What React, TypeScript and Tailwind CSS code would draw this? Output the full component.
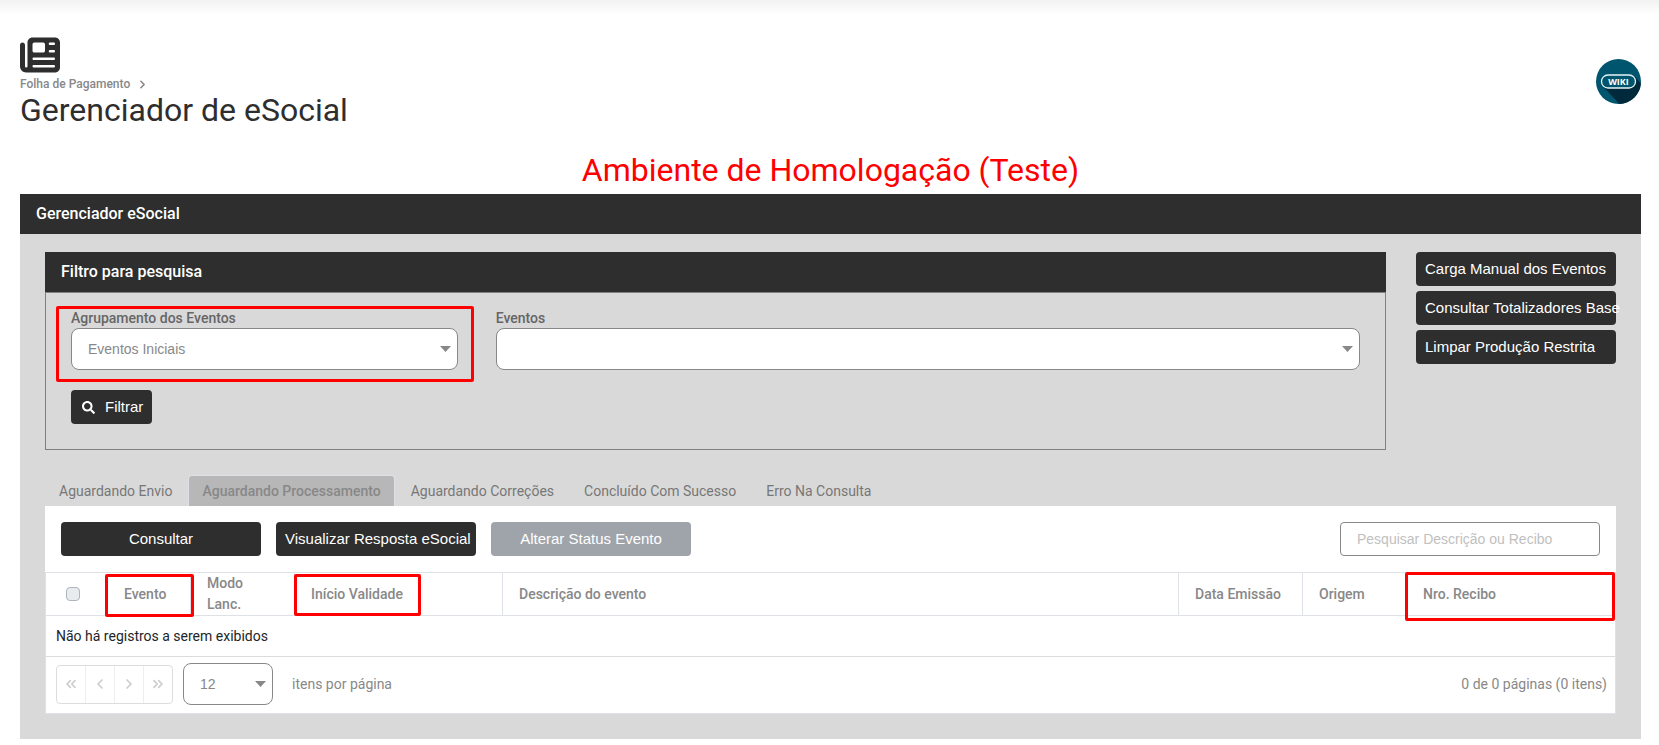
import { useState, type ReactNode } from "react";
import { ChevronLeft, ChevronRight, ChevronsLeft, ChevronsRight } from "lucide-react";
import { FaNewspaper } from "react-icons/fa6";
import { FaSearch } from "react-icons/fa";
import clsx from "clsx";

const TABS = [
    "Aguardando Envio",
    "Aguardando Processamento",
    "Aguardando Correções",
    "Concluído Com Sucesso",
    "Erro Na Consulta",
];

function Highlight({ className }: { className: string }) {
    return <span aria-hidden className={clsx("pointer-events-none absolute z-10 rounded-[2px] border-3 border-[#ff0000]", className)} />;
}

function ActionButton({ children, className, disabled }: {
    children: ReactNode;
    className?: string;
    disabled?: boolean;
}) {
    return (
        <button
            type="button"
            disabled={disabled}
            className={clsx(
                "h-[34px] rounded-[4px] px-[9px] font-['Liberation_Sans',Arial,sans-serif] text-[15px] whitespace-nowrap text-white",
                disabled ? "bg-[#9fa4ab]" : "bg-[#2e2e2e]",
                className
            )}
        >
            {children}
        </button>
    );
}

function Dropdown({ id, label, options }: {
    id: string;
    label?: string;
    options: string[];
}) {
    return (
        <div className="relative">
            <select
                id={id}
                aria-label={label}
                className="h-[42px] w-full appearance-none rounded-[8px] border border-[#888888] bg-white pr-8 pl-4 font-['Liberation_Sans',Arial,sans-serif] text-sm text-[#888888]"
            >
                {options.map((option) => (
                    <option key={option}>{option}</option>
                ))}
            </select>
            <svg viewBox="0 0 11 6" className="pointer-events-none absolute top-[18px] right-[7px] h-[6px] w-[11px] fill-[#888888]">
                <path d="M0 0h11L5.500 6z" />
            </svg>
        </div>
    );
}

function WikiLogo() {
    return (
        <svg viewBox="0 0 45 45" className="size-[45px]">
            <circle cx="22.5" cy="22.5" r="22.5" fill="#00556e" />
            <path d="M7.500 28 23.500 45A22.500 22.500 0 0 0 44.900 24.500L39 18z" fill="#002a3b" />
            <rect x="5.500" y="16" width="34" height="13" rx="6.500" fill="#00556e" stroke="#e8f3f5" strokeWidth="1.300" />
            <text
                x="22.500"
                y="26"
                textAnchor="middle"
                className="fill-white font-['Open_Sans',sans-serif] text-[9px] font-bold"
            >
                WIKI
            </text>
        </svg>
    );
}

function SectionTitle({ children }: { children: ReactNode }) {
    return <h2 className="bg-[#2e2e2e] px-4 text-base/10 font-medium text-white">{children}</h2>;
}

function FilterPanel() {
    return (
        <section className="min-w-0 flex-1">
            <SectionTitle>Filtro para pesquisa</SectionTitle>
            <div className="border border-[#808080] px-[25px] pt-[15px] pb-[25px]">
                <div className="flex gap-[38px]">
                    <div className="relative w-[30%]">
                        <label htmlFor="agrupamento" className="block text-sm/5 font-medium text-[#666666]">
                            Agrupamento dos Eventos
                        </label>
                        <Dropdown id="agrupamento" options={["Eventos Iniciais"]} />
                        <Highlight className="-top-[2px] -right-4 -bottom-3 -left-[15px]" />
                    </div>
                    <div className="flex-1">
                        <label htmlFor="eventos" className="block text-sm/5 font-medium text-[#666666]">
                            Eventos
                        </label>
                        <Dropdown id="eventos" options={[""]} />
                    </div>
                </div>
                <ActionButton className="mt-5 flex items-center gap-[10px]">
                    <FaSearch className="ml-[2px] size-[13px]" />
                    Filtrar
                </ActionButton>
            </div>
        </section>
    );
}

function EventsTable() {
    const th = "relative h-[43px] border-r border-b border-[#dee2e6] px-4 text-left font-medium text-[#888888]";

    return (
        <table className="w-full table-fixed border-separate border-spacing-0 border border-b-0 border-[#dee2e6] text-sm/[21px]">
            <colgroup>
                <col className="w-[62px]" />
                <col className="w-[83px]" />
                <col className="w-[104px]" />
                <col className="w-[208px]" />
                <col />
                <col className="w-[124px]" />
                <col className="w-[104px]" />
                <col className="w-[208px]" />
            </colgroup>
            <thead>
                <tr>
                    <th className="border-b border-[#dee2e6] pl-5 text-left">
                        <input
                            type="checkbox"
                            aria-label="Selecionar todos"
                            className="block size-[14px] appearance-none rounded-[4px] border border-[#adb5bd] bg-[#e9ecef]"
                        />
                    </th>
                    <th className={th}>
                        Evento
                        <Highlight className="top-[1px] -right-1 -bottom-[2px] -left-[3px]" />
                    </th>
                    <th className={th}>Modo Lanc.</th>
                    <th className={th}>
                        Início Validade
                        <Highlight className="top-[1px] -bottom-[1px] -left-[1px] w-[127px]" />
                    </th>
                    <th className={th}>Descrição do evento</th>
                    <th className={th}>Data Emissão</th>
                    <th className={th}>Origem</th>
                    <th className={clsx(th, "border-r-0")}>
                        Nro. Recibo
                        <Highlight className="-top-[1px] right-0 -bottom-[6px] -left-[2px]" />
                    </th>
                </tr>
            </thead>
            <tbody>
                <tr>
                    <td colSpan={8} className="h-[41px] border-b border-[#dcdcdc] px-[10px] text-[#212529]">
                        Não há registros a serem exibidos
                    </td>
                </tr>
            </tbody>
        </table>
    );
}

function Pager() {
    const buttons = [
        { label: "Primeira página", icon: ChevronsLeft },
        { label: "Página anterior", icon: ChevronLeft },
        { label: "Próxima página", icon: ChevronRight },
        { label: "Última página", icon: ChevronsRight },
    ];

    return (
        <div className="flex items-center border border-t-0 border-[#dee2e6] pt-[6px] pr-2 pb-2 pl-[10px] text-sm text-[#888888]">
            <nav className="flex h-[39px] w-[117px] divide-x divide-[#eeeeee] rounded-[4px] border border-[#dddddd]">
                {buttons.map(({ label, icon: Icon }) => (
                    <button key={label} type="button" aria-label={label} disabled className="flex flex-1 items-center justify-center text-[#cccccc]">
                        <Icon size={16} strokeWidth={2.5} />
                    </button>
                ))}
            </nav>
            <div className="mr-[19px] ml-[10px] w-[90px]">
                <Dropdown id="por-pagina" label="Itens por página" options={["12"]} />
            </div>
            <span>itens por página</span>
            <span className="ml-auto">0 de 0 páginas (0 itens)</span>
        </div>
    );
}

export default function App() {
    const [activeTab, setActiveTab] = useState(TABS[1]);

    return (
        <div className="bg-white font-[Roboto,sans-serif] text-[#2e2e2e]">
            <div className="h-[15px] bg-linear-to-b from-[#f2f2f2] to-white" />
            <div className="px-5 pt-5 sm:pr-[18px]">
                <header className="flex items-center justify-between">
                    <div>
                        <FaNewspaper className="size-10" />
                        <a href="#" className="flex items-center gap-[6px] text-xs/[18px] font-medium text-[#888888]">
                            Folha de Pagamento
                            <ChevronRight size={13} strokeWidth={3} />
                        </a>
                        <h1 className="text-[32px]/[34px]">Gerenciador de eSocial</h1>
                    </div>
                    <a href="#" aria-label="Wiki">
                        <WikiLogo />
                    </a>
                </header>

                <p className="mt-[19px] text-center text-[32px]/[48px] text-[#ff0000]">Ambiente de Homologação (Teste)</p>

                <main>
                    <SectionTitle>Gerenciador eSocial</SectionTitle>
                    <div className="bg-[#d9d9d9] px-[25px] pt-[18px] pb-[25px]">
                        <div className="flex items-start gap-[30px]">
                            <FilterPanel />
                            <div className="flex w-[200px] shrink-0 flex-col gap-[5px]">
                                <ActionButton className="text-left">Carga Manual dos Eventos</ActionButton>
                                <ActionButton className="text-left">Consultar Totalizadores Base</ActionButton>
                                <ActionButton className="text-left">Limpar Produção Restrita</ActionButton>
                            </div>
                        </div>

                        <div role="tablist" className="mt-[25px] flex gap-[2px]">
                            {TABS.map((tab) => (
                                <button
                                    key={tab}
                                    type="button"
                                    role="tab"
                                    aria-selected={tab === activeTab}
                                    onClick={() => setActiveTab(tab)}
                                    className={clsx(
                                        "h-[31px] rounded-t-[4px] border border-b-0 px-[13px] text-sm",
                                        tab === activeTab
                                            ? "border-[#dee2e6] bg-[#b7b7b7] font-medium text-[#888888]"
                                            : "border-transparent text-[#777777]"
                                    )}
                                >
                                    {tab}
                                </button>
                            ))}
                        </div>

                        <section className="bg-white">
                            <div className="flex items-center gap-[15px] p-4">
                                <ActionButton className="w-[200px]">Consultar</ActionButton>
                                <ActionButton className="w-[200px]">Visualizar Resposta eSocial</ActionButton>
                                <ActionButton className="w-[200px]" disabled>Alterar Status Evento</ActionButton>
                                <input
                                    type="search"
                                    aria-label="Pesquisar Descrição ou Recibo"
                                    placeholder="Pesquisar Descrição ou Recibo"
                                    className="ml-auto h-[34px] w-[260px] rounded-[4px] border border-[#888888] px-4 font-['Liberation_Sans',Arial,sans-serif] text-sm placeholder:text-[#bfbfbf]"
                                />
                            </div>
                            <EventsTable />
                            <Pager />
                        </section>
                    </div>
                </main>
            </div>
        </div>
    );
}
